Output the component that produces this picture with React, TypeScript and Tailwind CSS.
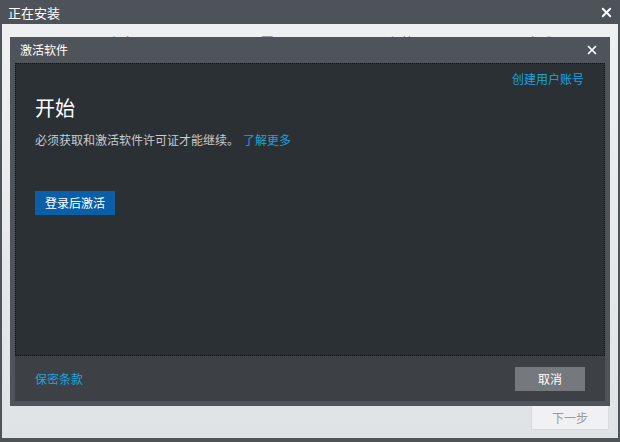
import React from "react";
import { X } from "lucide-react";

const font = { fontFamily: '"Noto Sans CJK SC", "Noto Sans", sans-serif' };

const steps = ["欢迎", "配置", "安装", "完成"];

export default function App() {
  return (
    <div
      className="w-[620px] h-[442px] bg-[#4e535a] flex flex-col overflow-hidden"
      style={font}
    >
      {/* Installer title bar */}
      <div className="h-[24px] flex items-center justify-between pl-[8px] pr-[6px] shrink-0">
        <span className="text-[13px] text-white leading-none">正在安装</span>
        <X className="w-[15px] h-[15px] text-white" strokeWidth={3} />
      </div>

      {/* Installer content */}
      <div className="relative flex-1 mx-[2px] mb-[4px] bg-gradient-to-b from-[#eff0f2] to-[#dfe3e5] flex flex-col">
        <div className="flex pl-[48px] pt-[11px]">
          {steps.map((s) => (
            <div key={s} className="w-[140px] text-[14px] text-[#8a8d90] text-center leading-none">
              {s}
            </div>
          ))}
        </div>

        <div className="mt-auto flex justify-end pr-[9px] pb-[8px]">
          <button className="w-[78px] h-[25px] border border-[#d7dadd] bg-[#f0f1f2] text-[12px] text-[#9a9a9a]">
            下一步
          </button>
        </div>

        {/* Activation dialog overlay */}
        <div className="absolute left-[8px] top-[13px] w-[600px] h-[369px] bg-[#4f545b] flex flex-col px-[5px] pb-[5px]">
          <div className="h-[26px] flex items-center justify-between pl-[5px] pr-[6px] shrink-0">
            <span className="text-[12px] text-white leading-none">激活软件</span>
            <X className="w-[14px] h-[14px] text-white" strokeWidth={3} />
          </div>

          <div className="flex-1 bg-[#2b3034] border border-dotted border-[#111416] flex flex-col px-[19px]">
            <div className="flex justify-end pt-[9px] pr-[1px]">
              <span className="text-[12px] text-[#1ba3de] leading-none">创建用户账号</span>
            </div>
            <div className="mt-[13px] text-[20px] text-white leading-none">开始</div>
            <div className="mt-[16px] text-[12px] text-[#c8cacc] leading-none">
              必须获取和激活软件许可证才能继续。
              <span className="ml-[4px] text-[#1ba3de]">了解更多</span>
            </div>
            <div className="mt-[43px]">
              <button className="w-[80px] h-[24px] bg-[#0b5fa8] text-[12px] text-white leading-none">
                登录后激活
              </button>
            </div>
          </div>

          <div className="h-[45px] bg-[#3d4145] flex items-center justify-between pl-[20px] pr-[20px] shrink-0">
            <span className="text-[12px] text-[#1ba3de] leading-none">保密条款</span>
            <button className="w-[70px] h-[24px] bg-[#75797d] text-[12px] text-white leading-none">
              取消
            </button>
          </div>
        </div>
      </div>
    </div>
  );
}
